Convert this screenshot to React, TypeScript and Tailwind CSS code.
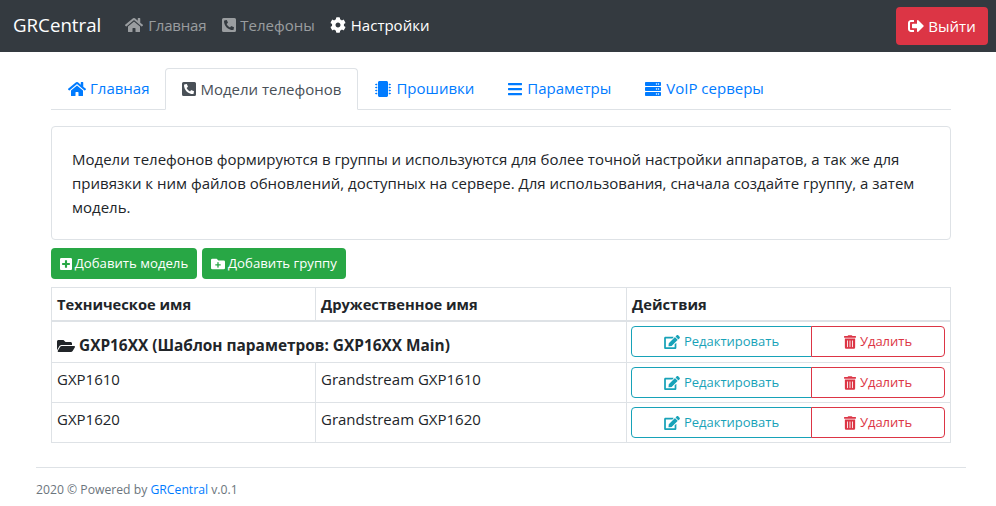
import {
  FaBars,
  FaCog,
  FaEdit,
  FaFolderOpen,
  FaFolderPlus,
  FaHome,
  FaMicrochip,
  FaPhoneSquareAlt,
  FaPlusSquare,
  FaServer,
  FaSignOutAlt,
  FaTrashAlt,
} from "react-icons/fa";

const models = [
  { name: "GXP1610", friendly: "Grandstream GXP1610" },
  { name: "GXP1620", friendly: "Grandstream GXP1620" },
];

const ActionButtons = () => (
  <div className="flex h-[31px] text-[13px]">
    <button className="flex w-[181px] items-center justify-center gap-[4px] rounded-l border border-[#17a2b8] text-[#17a2b8]">
      <FaEdit className="h-[14px] w-[16px]" />
      Редактировать
    </button>
    <button className="-ml-px flex w-[134px] items-center justify-center gap-[4px] rounded-r border border-[#dc3545] text-[#dc3545]">
      <FaTrashAlt className="h-[14px] w-[12px]" />
      Удалить
    </button>
  </div>
);

export default function App() {
  return (
    <div className="min-h-[506px] bg-white font-['Open_Sans','Noto_Sans',sans-serif] text-[15px] text-[#212529]">
      {/* Navbar */}
      <nav className="flex h-[52px] items-center bg-[#343a40] pr-[8px] pl-[13px]">
        <span className="mr-[24px] mb-[2px] text-[18.7px] text-white">GRCentral</span>
        <div className="mb-[2px] flex items-center text-[#ffffff80]">
          <span className="mr-[16px] flex items-center gap-[5px] tracking-[-0.2px]">
            <FaHome className="h-[16px] w-[18px]" /> Главная
          </span>
          <span className="mr-[15px] flex items-center gap-[4px]">
            <FaPhoneSquareAlt className="h-[16px] w-[14px]" /> Телефоны
          </span>
          <span className="flex items-center gap-[5px] text-white">
            <FaCog className="h-[16px] w-[16px]" /> Настройки
          </span>
        </div>
        <button className="ml-auto flex h-[38px] w-[92px] items-center justify-center gap-[4px] rounded bg-[#dc3545] text-white">
          <FaSignOutAlt className="h-[16px] w-[16px]" /> Выйти
        </button>
      </nav>

      <div className="pt-[16px] pr-[45px] pl-[51px]">
        {/* Tabs */}
        <div className="flex h-[42px] border-b border-[#dee2e6]">
          <a className="flex items-center gap-[4px] pr-[16px] pl-[17px] text-[#007bff]">
            <FaHome className="h-[16px] w-[18px]" /> Главная
          </a>
          <a className="-mb-px flex items-center gap-[4px] rounded-t border border-[#dee2e6] border-b-white bg-white px-[16px] text-[#495057]">
            <FaPhoneSquareAlt className="h-[16px] w-[14px]" /> Модели телефонов
          </a>
          <a className="flex items-center gap-[5px] px-[17px] text-[#007bff]">
            <FaMicrochip className="h-[16px] w-[16px]" /> Прошивки
          </a>
          <a className="flex items-center gap-[5px] px-[17px] text-[#007bff]">
            <FaBars className="h-[16px] w-[14px]" /> Параметры
          </a>
          <a className="flex items-center gap-[5px] px-[17px] text-[#007bff]">
            <FaServer className="h-[16px] w-[16px]" /> VoIP серверы
          </a>
        </div>

        {/* Description */}
        <div className="mt-[16px] h-[114px] rounded border border-[#dee2e6] px-[20px] pt-[20px] leading-[24px]">
          Модели телефонов формируются в группы и используются для более точной
          настройки аппаратов, а так же для привязки к ним файлов обновлений,
          доступных на сервере. Для использования, сначала создайте группу, а
          затем модель.
        </div>

        <div className="mt-[8px] flex gap-[5px] text-[13.2px] text-white">
          <button className="flex h-[31px] w-[146px] items-center justify-center gap-[3px] rounded bg-[#28a745]">
            <FaPlusSquare className="h-[14px] w-[12px]" /> Добавить модель
          </button>
          <button className="flex h-[31px] w-[144px] items-center justify-center gap-[3px] rounded bg-[#28a745]">
            <FaFolderPlus className="h-[14px] w-[14px]" /> Добавить группу
          </button>
        </div>

        {/* Models table */}
        <table className="mt-[8px] w-[899px] table-fixed border-collapse border border-[#dee2e6]">
          <colgroup>
            <col className="w-[264px]" />
            <col className="w-[311px]" />
            <col className="w-[324px]" />
          </colgroup>
          <thead>
            <tr className="h-[33px] border-b-2 border-[#dee2e6] text-left text-[14.7px]">
              <th className="border-r border-[#dee2e6] px-[5px] font-bold">
                Техническое имя
              </th>
              <th className="border-r border-[#dee2e6] px-[5px] font-bold">
                Дружественное имя
              </th>
              <th className="px-[5px] font-bold">Действия</th>
            </tr>
          </thead>
          <tbody>
            <tr className="h-[42px] border-b border-[#dee2e6]">
              <td colSpan={2} className="border-r border-[#dee2e6] px-[5px] pt-[8px] text-[15.4px] font-bold">
                <span className="flex items-center gap-[4px]">
                  <FaFolderOpen className="h-[16px] w-[18px]" />
                  GXP16XX (Шаблон параметров: GXP16XX Main)
                </span>
              </td>
              <td className="pr-[3px] pl-[4px]">
                <ActionButtons />
              </td>
            </tr>
            {models.map((model) => (
              <tr key={model.name} className="h-[40px] border-b border-[#dee2e6]">
                <td className="border-r border-[#dee2e6] px-[5px] pb-[6px]">{model.name}</td>
                <td className="border-r border-[#dee2e6] px-[5px] pb-[6px]">{model.friendly}</td>
                <td className="pr-[3px] pl-[4px]">
                  <ActionButtons />
                </td>
              </tr>
            ))}
          </tbody>
        </table>
      </div>

      {/* Footer */}
      <footer className="mt-[24px] mr-[30px] ml-[36px] border-t border-[#dee2e6] pt-[13px] text-[12.2px] text-[#6c757d]">
        2020 © Powered by <a className="text-[#007bff]">GRCentral</a> v.0.1
      </footer>
    </div>
  );
}
